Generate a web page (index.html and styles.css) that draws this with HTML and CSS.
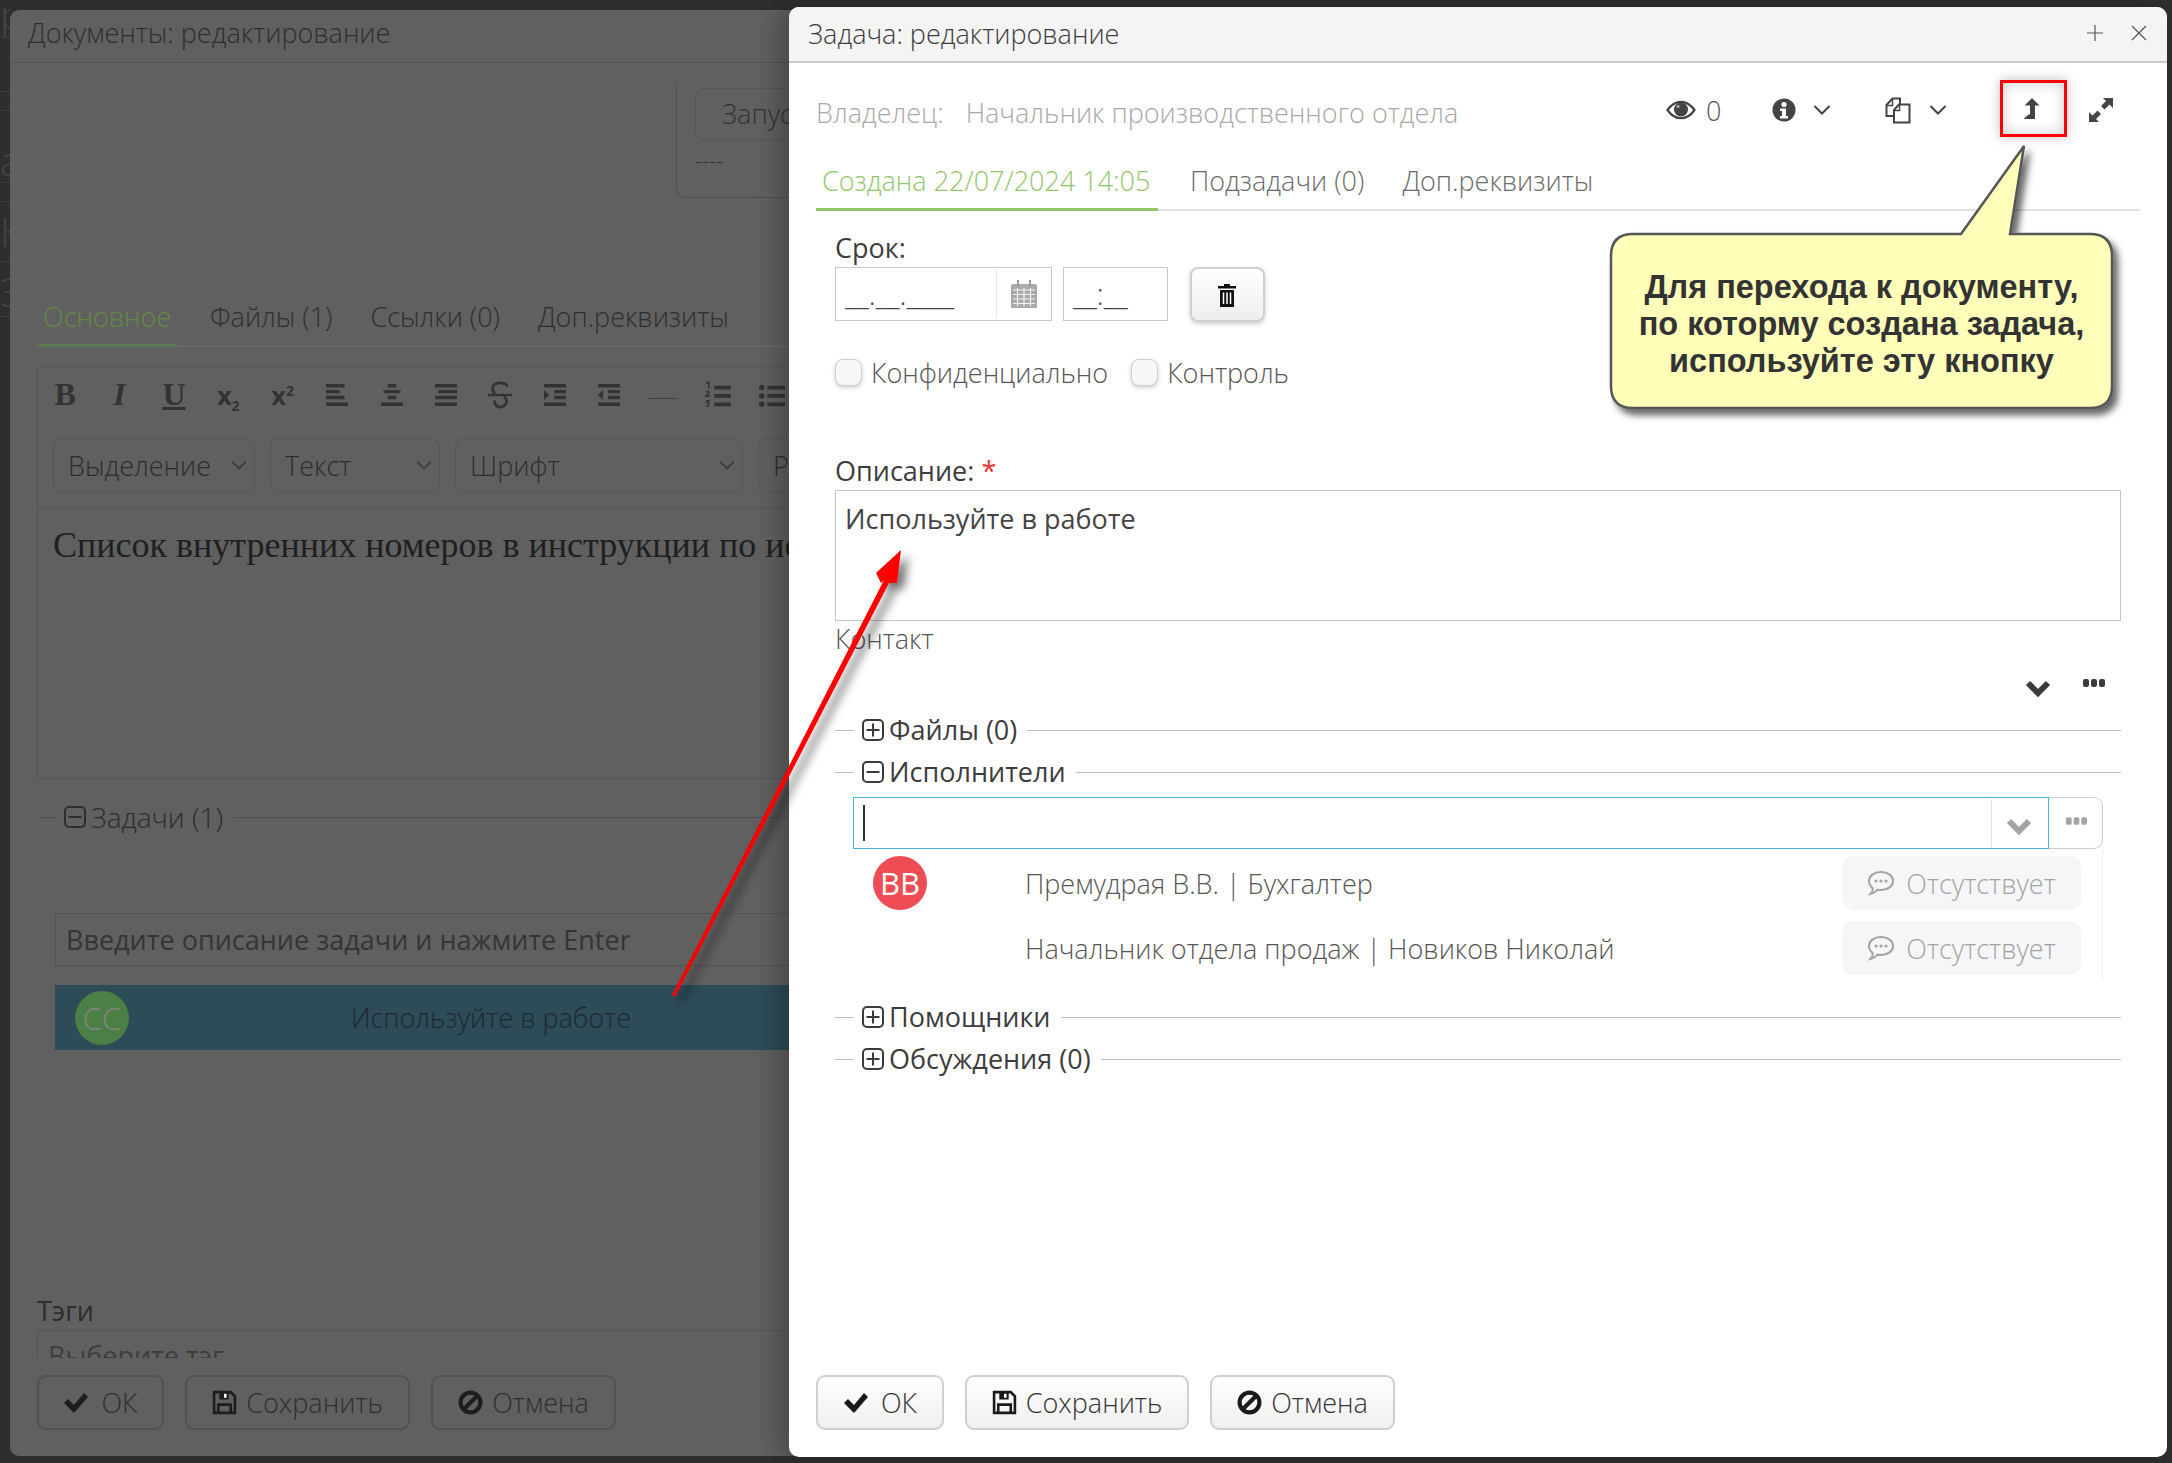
FILE: index.html
```html
<!DOCTYPE html>
<html lang="ru">
<head>
<meta charset="utf-8">
<title>Задача: редактирование</title>
<link rel="stylesheet" href="styles.css">
</head>
<body>
<svg class="sprite" width="0" height="0" aria-hidden="true">
  <symbol id="i-plus" viewBox="0 0 22 22"><rect x="1" y="1" width="20" height="20" rx="4" fill="none" stroke="currentColor" stroke-width="2"/><path d="M4.500 11h13M11 4.500v13" stroke="currentColor" stroke-width="2" fill="none"/></symbol>
  <symbol id="i-minus" viewBox="0 0 22 22"><rect x="1" y="1" width="20" height="20" rx="4" fill="none" stroke="currentColor" stroke-width="2"/><path d="M4.500 11h13" stroke="currentColor" stroke-width="2" fill="none"/></symbol>
  <symbol id="i-chev" viewBox="0 0 26 20"><path d="M3 6l10 10L23 6" fill="none" stroke="currentColor" stroke-width="6"/></symbol>
  <symbol id="i-thin" viewBox="0 0 18 12"><path d="M1.500 2l7.500 7.500L16.500 2" fill="none" stroke="currentColor" stroke-width="2"/></symbol>
  <symbol id="i-dots" viewBox="0 0 24 10"><rect x="1" y="1" width="6" height="8" rx="2" fill="currentColor"/><rect x="9" y="1" width="6" height="8" rx="2" fill="currentColor"/><rect x="17" y="1" width="6" height="8" rx="2" fill="currentColor"/></symbol>
  <symbol id="i-check" viewBox="0 0 26 22"><path d="M1 11l4-4 6 6L21 1l4 4-14 16z" fill="currentColor"/></symbol>
  <symbol id="i-save" viewBox="0 0 24 24"><path d="M2 2h16l4 4v16H2z" fill="none" stroke="currentColor" stroke-width="2.500"/><path d="M7 2h9v7H7z" fill="currentColor"/><path d="M11.500 3.500h2.500v4h-2.500z" fill="#fff"/><path d="M6 22v-8h12v8" fill="none" stroke="currentColor" stroke-width="2.500"/></symbol>
  <symbol id="i-ban" viewBox="0 0 24 24"><circle cx="12" cy="12" r="9.500" fill="none" stroke="currentColor" stroke-width="4"/><path d="M5.500 18.500l13-13" stroke="currentColor" stroke-width="4"/></symbol>
  <symbol id="i-chat" viewBox="0 0 28 26"><path d="M14 2c7 0 12 4 12 9s-5 9-12 9c-1.500 0-2.500 0-3.500-.3C9 21.500 6.500 23.500 3.500 24c1.500-1.500 2.500-3.500 2.300-5.700C3.500 16.500 2 14 2 11c0-5 5-9 12-9z" fill="none" stroke="currentColor" stroke-width="2"/><circle cx="9" cy="11" r="1.600" fill="currentColor"/><circle cx="14" cy="11" r="1.600" fill="currentColor"/><circle cx="19" cy="11" r="1.600" fill="currentColor"/></symbol>
  <symbol id="i-left" viewBox="0 0 26 26"><path d="M0 0h22v4H0zM0 7h16v4H0zM0 14h22v4H0zM0 22h26v4H0z" fill="currentColor"/></symbol>
  <symbol id="i-center" viewBox="0 0 26 26"><path d="M8 0h10v4H8zM3 7h20v4H3zM8 14h10v4H8zM0 22h26v4H0z" fill="currentColor"/></symbol>
  <symbol id="i-right" viewBox="0 0 26 26"><path d="M0 0h26v4H0zM4 7h22v4H4zM0 14h26v4H0zM0 22h26v4H0z" fill="currentColor"/></symbol>
  <symbol id="i-indent" viewBox="0 0 26 26"><path d="M0 0h26v4H0zM12 7h14v4H12zM12 14h14v4H12zM0 22h26v4H0zM0 7l6 6-6 6z" fill="currentColor"/></symbol>
  <symbol id="i-outdent" viewBox="0 0 26 26"><path d="M0 0h26v4H0zM12 7h14v4H12zM12 14h14v4H12zM0 22h26v4H0zM6 7v12l-6-6z" fill="currentColor"/></symbol>
  <symbol id="i-strike" viewBox="0 0 26 30"><path d="M21 6c-1-3-5-4-8-4-4 0-8 2-8 6 0 2 1 4 3 5M7 21c0 4 3 7 6 7 4 0 7-3 7-6 0-2-1-4-3-5" fill="none" stroke="currentColor" stroke-width="3"/><path d="M0 15h26" stroke="currentColor" stroke-width="2.500"/></symbol>
  <symbol id="i-ol" viewBox="0 0 28 30"><path d="M10 5h18v4H10zM10 14h18v4H10zM10 23h18v4H10z" fill="currentColor"/><path d="M1 3l3-2v7M1 12c2-2 4 0 3 1l-3 3h4M1 21h3l-2 2c3 0 3 4 0 4H1" fill="none" stroke="currentColor" stroke-width="1.500"/></symbol>
  <symbol id="i-ul" viewBox="0 0 28 30"><circle cx="3" cy="7" r="3" fill="currentColor"/><circle cx="3" cy="16" r="3" fill="currentColor"/><circle cx="3" cy="25" r="3" fill="currentColor"/><path d="M9 5h19v4H9zM9 14h19v4H9zM9 23h19v4H9z" fill="currentColor"/></symbol>
</svg>

<main class="desk">
  <div class="back-rows">
    <p class="back-row back-row-a">ри</p>
    <p class="back-row back-row-b"></p>
    <p class="back-row back-row-c"></p>
    <p class="back-row back-row-d">а</p>
    <p class="back-row back-row-e"></p>
    <p class="back-row back-row-f">Н</p>
    <p class="back-row back-row-g">З</p>
  </div>

  <section class="win win-back">
    <header class="back-title">Документы: редактирование</header>
    <div class="back-scroll">
      <div class="run-panel">
        <div class="run-btn">Запуск</div>
        <div class="run-dash">----</div>
      </div>
      <nav class="back-tabs">
        <span class="back-tab back-tab-on">Основное</span>
        <span class="back-tab back-tab-2">Файлы (1)</span>
        <span class="back-tab">Ссылки (0)</span>
        <span class="back-tab">Доп.реквизиты</span>
      </nav>
      <div class="editor">
        <div class="ed-tools">
          <span class="ed-i ed-serif">B</span>
          <span class="ed-i ed-serif ed-it">I</span>
          <span class="ed-i ed-serif"><u>U</u></span>
          <span class="ed-i ed-sub"><span>x<sub>2</sub></span></span>
          <span class="ed-i ed-sub"><span>x<sup>2</sup></span></span>
          <span class="ed-i"><svg class="ed-svg"><use href="#i-left"/></svg></span>
          <span class="ed-i"><svg class="ed-svg"><use href="#i-center"/></svg></span>
          <span class="ed-i"><svg class="ed-svg"><use href="#i-right"/></svg></span>
          <span class="ed-i"><svg class="ed-svg ed-tall"><use href="#i-strike"/></svg></span>
          <span class="ed-i"><svg class="ed-svg"><use href="#i-indent"/></svg></span>
          <span class="ed-i"><svg class="ed-svg"><use href="#i-outdent"/></svg></span>
          <span class="ed-i ed-hr"></span>
          <span class="ed-i"><svg class="ed-svg ed-tall"><use href="#i-ol"/></svg></span>
          <span class="ed-i"><svg class="ed-svg ed-tall"><use href="#i-ul"/></svg></span>
        </div>
        <div class="ed-selects">
          <div class="ed-sel ed-sel-1"><span>Выделение</span><svg class="sel-chev"><use href="#i-thin"/></svg></div>
          <div class="ed-sel ed-sel-2"><span>Текст</span><svg class="sel-chev"><use href="#i-thin"/></svg></div>
          <div class="ed-sel ed-sel-3"><span>Шрифт</span><svg class="sel-chev"><use href="#i-thin"/></svg></div>
          <div class="ed-sel ed-sel-4"><span>Размер</span></div>
        </div>
        <div class="ed-body">Список внутренних номеров в инструкции по использованию</div>
      </div>
      <div class="legend legend-back"><svg class="legend-i"><use href="#i-minus"/></svg><span class="legend-t">Задачи (1)</span></div>
      <div class="back-input">Введите описание задачи и нажмите Enter</div>
      <div class="task-row"><span class="avatar avatar-green">СС</span><span class="task-text">Используйте в работе</span></div>
      <div class="tag-label">Тэги</div>
      <div class="tag-input">Выберите тэг</div>
    </div>
    <footer class="back-foot">
      <span class="bk-btn bk-ok"><svg class="ic-check"><use href="#i-check"/></svg>ОК</span>
      <span class="bk-btn bk-save"><svg class="ic-save"><use href="#i-save"/></svg>Сохранить</span>
      <span class="bk-btn bk-cancel"><svg class="ic-ban"><use href="#i-ban"/></svg>Отмена</span>
    </footer>
  </section>

  <section class="win win-front">
    <header class="front-title">
      <span>Задача: редактирование</span>
      <span class="title-ctrls">
        <svg class="ctl" viewBox="0 0 18 18"><path d="M9 1v16M1 9h16" stroke="#555" stroke-width="1.200"/></svg>
        <svg class="ctl" viewBox="0 0 18 18"><path d="M2 2l14 14M16 2L2 16" stroke="#555" stroke-width="1.200"/></svg>
      </span>
    </header>
    <div class="front-body">
      <div class="owner-row">
        <span class="owner-k">Владелец:</span>
        <span class="owner-v">Начальник производственного отдела</span>
        <span class="tools">
          <svg class="t-eye" viewBox="0 0 30 20"><path d="M1.500 10C6 3.500 10 1.800 15 1.800S24 3.500 28.500 10C24 16.500 20 18.200 15 18.200S6 16.500 1.500 10z" fill="none" stroke="#444" stroke-width="2.200"/><circle cx="15" cy="9.500" r="7" fill="#444"/><circle cx="12" cy="6.500" r="1.800" fill="#999"/></svg>
          <span class="t-zero">0</span>
          <svg class="t-info" viewBox="0 0 24 24"><circle cx="12" cy="12" r="11.500" fill="#444"/><circle cx="12" cy="6.500" r="2.600" fill="#fff"/><path d="M8 10.500h6v7.500h2v2.500H8V18h2v-5H8z" fill="#fff"/></svg>
          <svg class="t-chev"><use href="#i-thin"/></svg>
          <svg class="t-doc" viewBox="0 0 26 27"><path d="M9 19H1.500V8l6-6.500H15v7" fill="none" stroke="#444" stroke-width="2"/><path d="M1.500 8.500h6v-7" fill="none" stroke="#444" stroke-width="1.500"/><path d="M9 25.500V13l5-5.500h10.500v18z" fill="#fff" stroke="#444" stroke-width="2"/><path d="M9 13.500h5.500v-6" fill="none" stroke="#444" stroke-width="1.500"/></svg>
          <svg class="t-chev t-chev-b"><use href="#i-thin"/></svg>
          <svg class="t-up" viewBox="0 0 24 24"><path d="M12 0l7.500 7.500H15V21H3.500l5-4.500H10V7.500H4.500z" fill="#444"/></svg>
          <svg class="t-exp" viewBox="0 0 24 24"><path d="M14 0h10v10l-3.500-3.500-5 5L12 8l5-5zM10 24H0V14l3.500 3.500 5-5L12 16l-5 5z" fill="#444"/></svg>
        </span>
      </div>
      <nav class="tabs">
        <span class="tab tab-on">Создана 22/07/2024 14:05</span>
        <span class="tab">Подзадачи (0)</span>
        <span class="tab">Доп.реквизиты</span>
      </nav>
      <form class="form">
        <div class="lbl lbl-term">Срок:</div>
        <div class="term-row">
          <div class="date-in"><span class="mask">__.__.____</span>
            <span class="cal"><svg class="cal-i" viewBox="0 0 26 28"><path d="M2 4h22a2 2 0 0 1 2 2v22H0V6a2 2 0 0 1 2-2z" fill="#aaa"/><path d="M2 10h22M2 14.500h22M2 19h22M2 23.500h22M6.500 8v18M13 8v18M19.500 8v18" stroke="#f2f2f2" stroke-width="1.200"/><path d="M7 6V0M19 6V0" stroke="#999" stroke-width="2"/></svg></span>
          </div>
          <div class="time-in"><span class="mask">__:__</span></div>
          <span class="trash"><svg class="trash-i" viewBox="0 0 20 24"><path d="M7 3V1h6v2h6v2.500H1V3zM3 7h14v17H3z" fill="#111"/><path d="M6.500 9.500v11.500M10 9.500v11.500M13.500 9.500v11.500" stroke="#fff" stroke-width="1.500"/></svg></span>
        </div>
        <div class="checks">
          <span class="chk"></span><span class="chk-t">Конфиденциально</span>
          <span class="chk chk-2"></span><span class="chk-t">Контроль</span>
        </div>
        <div class="lbl lbl-desc">Описание: <b class="req">*</b></div>
        <div class="area">Используйте в работе</div>
        <div class="contact">Контакт</div>
        <div class="contact-tools">
          <svg class="ct-chev"><use href="#i-chev"/></svg>
          <svg class="ct-dots"><use href="#i-dots"/></svg>
        </div>
        <div class="legend"><svg class="legend-i"><use href="#i-plus"/></svg><span class="legend-t">Файлы (0)</span></div>
        <div class="legend legend-next"><svg class="legend-i"><use href="#i-minus"/></svg><span class="legend-t">Исполнители</span></div>
        <div class="pick">
          <div class="pick-in"><span class="caret"></span>
            <span class="pick-drop"><svg class="pick-chev"><use href="#i-chev"/></svg></span>
          </div>
          <div class="pick-more"><svg class="pick-dots"><use href="#i-dots"/></svg></div>
        </div>
        <div class="people">
          <div class="person"><span class="avatar avatar-red">ВВ</span><span class="person-n">Премудрая В.В. | Бухгалтер</span><span class="absent"><svg class="absent-i"><use href="#i-chat"/></svg>Отсутствует</span></div>
          <div class="person"><span class="avatar avatar-none"></span><span class="person-n">Начальник отдела продаж | Новиков Николай</span><span class="absent"><svg class="absent-i"><use href="#i-chat"/></svg>Отсутствует</span></div>
        </div>
        <div class="legend legend-help"><svg class="legend-i"><use href="#i-plus"/></svg><span class="legend-t">Помощники</span></div>
        <div class="legend legend-next"><svg class="legend-i"><use href="#i-plus"/></svg><span class="legend-t">Обсуждения (0)</span></div>
      </form>
      <footer class="front-foot">
        <span class="btn btn-ok"><svg class="ic-check"><use href="#i-check"/></svg>ОК</span>
        <span class="btn btn-save"><svg class="ic-save"><use href="#i-save"/></svg>Сохранить</span>
        <span class="btn btn-cancel"><svg class="ic-ban"><use href="#i-ban"/></svg>Отмена</span>
      </footer>
    </div>
  </section>

  <svg class="arrow" viewBox="0 0 2172 1463">
    <defs><filter id="shade" x="-30%" y="-10%" width="160%" height="120%"><feDropShadow dx="7" dy="6" stdDeviation="5" flood-color="#000" flood-opacity=".55"/></filter></defs>
    <path filter="url(#shade)" fill="#f00" d="M672 995L884 580 881 583 876 573 901 550 897 583 889 583 675 997z"/>
  </svg>
  <div class="red-box"></div>
  <aside class="callout">
    <svg class="callout-shape" viewBox="0 0 530 290">
      <defs><filter id="shade2" x="-5%" y="-5%" width="112%" height="115%"><feDropShadow dx="5" dy="6" stdDeviation="3.500" flood-color="#000" flood-opacity=".6"/></filter></defs>
      <path filter="url(#shade2)" fill="#ffffb9" stroke="#565656" stroke-width="2.500" d="M33 94H361L424 6 410 94H490Q512 94 512 116V246Q512 268 490 268H33Q11 268 11 246V116Q11 94 33 94z"/>
    </svg>
    <p class="callout-text">Для перехода к документу,<br>по которму создана задача,<br>используйте эту кнопку</p>
  </aside>
</main>
</body>
</html>
```
FILE: styles.css
```css
* { box-sizing: border-box; }
html, body { margin: 0; padding: 0; height: 100%; }
body { font-family: "Open Sans", "Noto Sans", sans-serif; font-weight: 300; font-size: 27px; color: #333; background: #2e2e2e; overflow: hidden; }
.sprite { position: absolute; }
svg { display: block; flex: none; }
.desk { position: relative; width: 2172px; height: 1463px; overflow: hidden; }

/* page behind the dialogs */
.back-rows { width: 10px; overflow: hidden; color: #444; }
.back-row { margin: 0; border-bottom: 1px solid #3c3c3c; white-space: nowrap; font-size: 40px; line-height: 30px; overflow: hidden; }
.back-row-a { height: 38px; padding-top: 0; }
.back-row-b { height: 54px; }
.back-row-c { height: 19px; }
.back-row-d { height: 72px; line-height: 100px; }
.back-row-e { height: 19px; }
.back-row-f { height: 60px; line-height: 60px; }
.back-row-g { height: 55px; line-height: 60px; }

/* dialogs: windows on a desktop */
.win { position: absolute; overflow: hidden; display: flex; flex-direction: column; }
.win-back { left: 10px; top: 10px; width: 800px; height: 1446px; background: #606060; border-radius: 9px 0 0 9px; color: #2b2b2b; }
.win-front { left: 789px; top: 7px; width: 1378px; height: 1450px; background: #fff; border-radius: 10px; box-shadow: -12px 0 22px rgba(0,0,0,.22); }

/* back dialog */
.back-title { flex: none; height: 53px; padding: 0 18px; line-height: 46px; border-bottom: 1px solid #525252; color: #2e2e2e; }
.back-scroll { flex: 1; min-height: 0; overflow: hidden; padding: 19px 0 0 27px; }
.run-panel { width: 300px; height: 116px; margin-left: 639px; padding: 6px 0 0 18px; border: 1px solid #4f4f4f; border-top: 0; border-right: 0; border-radius: 0 0 0 9px; }
.run-btn { height: 53px; width: 200px; padding: 0 26px; line-height: 50px; border: 1px solid #565656; border-radius: 9px 0 0 9px; color: #333; }
.run-dash { font-size: 22px; line-height: 26px; margin-top: 6px; color: #333; }
.back-tabs { display: flex; width: 760px; height: 51px; margin-top: 98px; border-bottom: 1px solid #6d6d6d; }
.back-tab { margin-left: 38px; line-height: 42px; height: 50px; color: #2f2f2f; }
.back-tab:first-child { margin-left: 0; padding: 0 6px; height: 51px; }
.back-tab-2 { margin-left: 33px; }
.back-tab-on { color: #628a45; border-bottom: 3px solid #5f7750; width: 140px; }
.editor { width: 760px; height: 413px; margin-top: 19px; border: 1px solid #555; border-right: 0; }
.ed-tools { display: flex; height: 55px; color: #333; }
.ed-i { flex: 0 0 54.400px; display: flex; align-items: center; justify-content: center; height: 55px; }
.ed-serif { font-family: "Liberation Serif", serif; font-weight: 700; font-size: 32px; }
.ed-it { font-style: italic; }
.ed-sub { font-family: "Noto Sans", sans-serif; font-weight: 700; font-size: 25px; }
.ed-sub sub, .ed-sub sup { font-size: 14px; line-height: 0; }
.ed-svg { width: 26px; height: 22px; }
.ed-tall { width: 26px; height: 28px; }
.ed-hr::after { content: ""; width: 28px; height: 1px; background: #3f3f3f; margin-top: 8px; }
.ed-selects { display: flex; gap: 15px; height: 86px; padding: 16px 0 14px 15px; border-bottom: 1px solid #555; }
.ed-sel { display: flex; align-items: center; justify-content: space-between; height: 55px; padding: 0 6px 0 14px; border: 1px solid #565656; border-radius: 9px; color: #2d2d2d; flex: none; }
.ed-sel-1 { width: 202px; }
.ed-sel-2 { width: 170px; }
.ed-sel-3 { width: 288px; }
.ed-sel-4 { width: 100px; }
.sel-chev { width: 16px; height: 11px; color: #3a3a3a; margin-right: 1px; }
.ed-body { font-family: "Liberation Serif", serif; font-weight: 400; font-size: 36px; line-height: 40px; padding: 17px 15px; white-space: nowrap; color: #1f1f1f; }
.legend { display: flex; align-items: center; height: 30px; line-height: 28px; white-space: nowrap; }
.legend::before { content: ""; width: 19px; height: 1px; background: #bdbdbd; margin-right: 8px; flex: none; }
.legend::after { content: ""; flex: 1; height: 1px; background: #bdbdbd; margin-left: 10px; }
.legend-i { width: 22px; height: 22px; color: #3b3b3b; margin-right: 5px; }
.legend-t { color: #3d3d3d; font-weight: 400; }
.legend-back { width: 760px; margin-top: 23px; }
.legend-back::before, .legend-back::after { background: #515151; }
.legend-back .legend-i { color: #2f2f2f; }
.legend-back .legend-t { color: #2d2d2d; font-weight: 300; font-size: 28px; }
.back-input { width: 760px; height: 53px; margin: 81px 0 0 18px; padding: 0 10px; line-height: 52px; border: 1px solid #535353; color: #353535; font-weight: 400; }
.task-row { display: flex; align-items: center; width: 760px; height: 65px; margin: 19px 0 0 18px; padding-left: 20px; background: #2e4b58; }
.avatar { flex: none; display: flex; align-items: center; justify-content: center; width: 54px; height: 54px; border-radius: 50%; font-size: 31px; font-weight: 400; }
.avatar-green { background: #4a8045; color: #848484; font-weight: 300; }
.task-text { margin-left: 222px; color: #1c2a30; }
.tag-label { height: 30px; line-height: 30px; margin-top: 246px; color: #2d2d2d; font-weight: 400; }
.tag-input { width: 760px; height: 54px; margin-top: 4px; padding: 0 10px; border: 1px solid #555; line-height: 50px; color: #3d3d3d; font-weight: 400; }
.back-foot { flex: none; display: flex; gap: 21px; height: 98px; padding: 17px 0 0 27px; }
.bk-btn { display: flex; align-items: center; justify-content: center; height: 55px; border: 2px solid #525252; border-radius: 9px; color: #2f2f2f; }
.bk-ok { width: 127px; }
.bk-save { width: 225px; }
.bk-cancel { width: 185px; }
.ic-check { width: 26px; height: 22px; margin-right: 12px; color: #1a1a1a; }
.ic-save { width: 25px; height: 25px; margin-right: 9px; color: #1a1a1a; }
.ic-ban { width: 25px; height: 25px; margin-right: 9px; color: #1a1a1a; }
.bk-btn svg { color: #1d1d1d; }

/* front dialog */
.front-title { flex: none; display: flex; align-items: center; justify-content: space-between; height: 56px; padding: 0 19px 2px 19px; background: #f4f4f4; border-bottom: 2px solid #c9c9c9; color: #3c3c3c; }
.title-ctrls { display: flex; align-items: center; gap: 26px; }
.ctl { width: 18px; height: 18px; }
.front-body { flex: 1; min-height: 0; display: flex; flex-direction: column; padding: 0 27px 27px; }
.owner-row { flex: none; display: flex; align-items: center; height: 100px; padding-bottom: 2px; color: #a9a9a9; }
.owner-k { margin-right: 22px; }
.tools { margin-left: auto; margin-right: 27px; margin-bottom: 4px; display: flex; align-items: center; color: #444; }
.t-eye { width: 30px; height: 20px; }
.t-zero { margin-left: 10px; width: 15px; color: #555; }
.t-info { width: 24px; height: 24px; margin-left: 51px; }
.t-chev { width: 18px; height: 12px; margin-left: 17px; }
.t-doc { width: 26px; height: 27px; margin-left: 54px; }
.t-chev-b { margin-left: 18px; }
.t-up { width: 24px; height: 24px; margin-left: 73px; }
.t-exp { width: 24px; height: 24px; margin-left: 45px; }
.tabs { flex: none; display: flex; height: 48px; border-bottom: 2px solid #e2e2e2; color: #6b6b6b; }
.tab { height: 48px; padding: 0 6px; line-height: 36px; margin-right: 26px; }
.tab-on { color: #92c56a; border-bottom: 3px solid #92c56a; width: 342px; white-space: nowrap; }
.form { flex: 1; padding: 0 19px; }
.lbl { height: 30px; line-height: 28px; color: #3d3d3d; font-weight: 400; }
.lbl-term { margin: 23px 0 3px; }
.term-row { display: flex; align-items: flex-start; }
.date-in, .time-in { display: flex; height: 54px; border: 1px solid #c8c8c8; color: #444; }
.date-in { width: 217px; }
.time-in { width: 105px; margin-left: 11px; }
.mask { flex: 1; padding-left: 9px; line-height: 52px; font-size: 29px; white-space: nowrap; }
.cal { flex: none; width: 55px; display: flex; align-items: center; justify-content: center; border-left: 1px solid #e6e6e6; margin: 2px 0; }
.cal-i { width: 26px; height: 28px; }
.trash { display: flex; align-items: center; justify-content: center; width: 75px; height: 55px; margin-left: 22px; padding-right: 2px; border: 2px solid #cfcfcf; border-radius: 8px; background: linear-gradient(#fff, #eee); box-shadow: 0 2px 4px rgba(0,0,0,.2); }
.trash-i { width: 20px; height: 24px; }
.checks { display: flex; align-items: center; height: 27px; margin-top: 37px; color: #555; }
.chk { flex: none; width: 27px; height: 27px; margin-right: 9px; border: 1px solid #cfcfcf; border-radius: 8px; background: #f7f7f7; box-shadow: 0 2px 4px rgba(0,0,0,.18); }
.chk-2 { margin-left: 23px; }
.lbl-desc { margin: 70px 0 4px; line-height: 30px; }
.req { color: #e33; font-weight: 400; }
.area { height: 131px; padding: 11px 9px; line-height: 34px; border: 1px solid #c4c4c4; font-weight: 400; color: #444; }
.contact { height: 30px; line-height: 26px; margin-top: 5px; color: #555; }
.contact-tools { display: flex; justify-content: flex-end; height: 59px; }
.ct-chev { width: 26px; height: 20px; margin: 21px 31px 0 0; color: #3b3b3b; }
.ct-dots { width: 24px; height: 10px; margin: 22px 15px 0 0; color: #3b3b3b; }
.legend-next { margin-top: 12px; }
.pick { display: flex; height: 52px; margin: 10px 18px 0; }
.pick-in { flex: 1; display: flex; justify-content: space-between; border: 1px solid #4ab4de; padding-left: 9px; }
.caret { width: 2px; height: 36px; margin-top: 7px; background: #333; }
.pick-drop { width: 57px; margin: 1px 0; border-left: 1px solid #e4e4e4; padding: 16px 0 0 14px; color: #a3a3a3; }
.pick-chev { width: 26px; height: 20px; }
.pick-more { width: 54px; border: 1px solid #ccc; border-left: 0; border-radius: 0 9px 9px 0; padding: 18px 0 0 16px; color: #a3a3a3; }
.pick-dots { width: 23px; height: 10px; }
.people { display: flex; flex-direction: column; gap: 11px; margin: 0 18px; padding: 7px 21px 5px 20px; border-right: 1px solid #f0f0f0; }
.person { display: flex; align-items: center; height: 54px; color: #555; }
.avatar-red { background: #ee4d55; color: #fff; }
.avatar-none { background: none; }
.person-n { margin-left: 98px; white-space: nowrap; }
.absent { display: flex; align-items: center; justify-content: center; width: 239px; height: 54px; margin-left: auto; background: #f5f6f8; border-radius: 10px; color: #a3a3a3; }
.absent-i { width: 28px; height: 26px; margin-right: 11px; }
.legend-help { margin-top: 22px; }
.front-foot { flex: none; display: flex; gap: 21px; }
.btn { display: flex; align-items: center; justify-content: center; height: 55px; border: 2px solid #d0d0d0; border-radius: 9px; background: linear-gradient(#fff, #efefef); color: #333; }
.btn-ok { width: 128px; }
.btn-save { width: 224px; }
.btn-cancel { width: 185px; }

/* annotations lying over the dialogs */
.arrow { position: absolute; left: 0; top: 0; width: 2172px; height: 1463px; pointer-events: none; }
.red-box { position: absolute; left: 2000px; top: 80px; width: 67px; height: 57px; border: 3px solid #f00; box-shadow: 0 0 11px rgba(0,0,0,.25), inset 0 0 14px rgba(0,0,0,.2); }
.callout { position: absolute; left: 1600px; top: 140px; width: 530px; height: 290px; }
.callout-shape { position: absolute; left: 0; top: 0; width: 530px; height: 290px; }
.callout-text { position: relative; margin: 129px 0 0 11px; width: 501px; font-family: "Liberation Sans", Arial, sans-serif; font-weight: 700; font-size: 32.500px; line-height: 37px; text-align: center; color: #333; }
```
